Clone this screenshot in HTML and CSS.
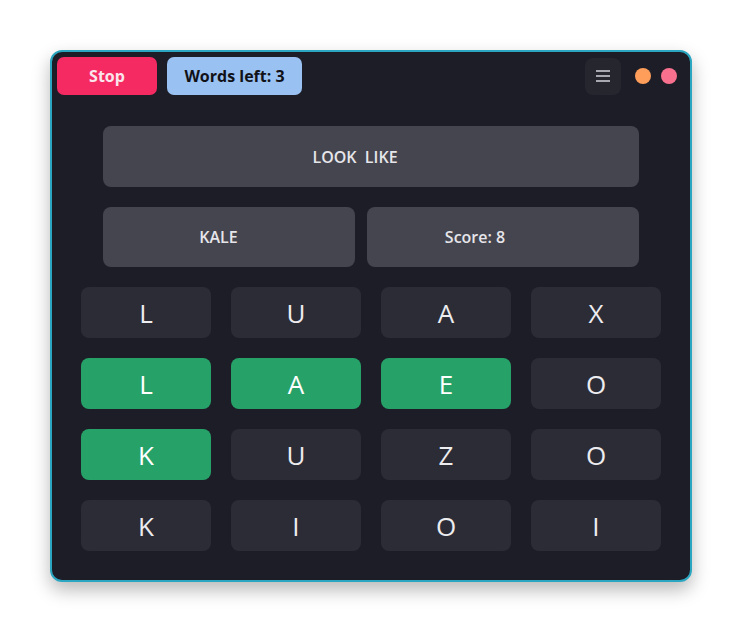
FILE: index.html
```
<!DOCTYPE html>
<html>
<head>
<meta charset="utf-8">
<link rel="stylesheet" href="styles.css">
</head>
<body>
<div class="window">
  <div class="header">
    <button class="btn stop">Stop</button>
    <div class="btn words">Words left: 3</div>
    <div class="spacer"></div>
    <button class="menu">
      <svg width="14" height="12" viewBox="0 0 14 12"><path d="M0 1h14M0 6h14M0 11h14" stroke="#a8a8b0" stroke-width="2"/></svg>
    </button>
    <span class="dot orange"></span>
    <span class="dot pink"></span>
  </div>
  <div class="content">
    <div class="info wide">LOOK&nbsp; LIKE</div>
    <div class="inforow">
      <div class="info word">KALE</div>
      <div class="info score">Score: 8</div>
    </div>
    <div class="grid">
      <div class="tile">L</div><div class="tile">U</div><div class="tile">A</div><div class="tile">X</div>
      <div class="tile on">L</div><div class="tile on">A</div><div class="tile on">E</div><div class="tile">O</div>
      <div class="tile on">K</div><div class="tile">U</div><div class="tile">Z</div><div class="tile">O</div>
      <div class="tile">K</div><div class="tile">I</div><div class="tile">O</div><div class="tile">I</div>
    </div>
  </div>
</div>
</body>
</html>
```
FILE: styles.css
```
html, body { margin: 0; padding: 0; background: #ffffff; }
body { padding: 50px; font-family: "Open Sans", "Noto Sans", sans-serif; }
.window {
  box-sizing: border-box;
  width: 642px;
  height: 532px;
  background: #1d1d27;
  border: 2px solid #2ba6c0;
  border-radius: 12px;
  box-shadow: 0 8px 18px rgba(0,0,0,0.28);
  display: flex;
  flex-direction: column;
}
.header {
  display: flex;
  align-items: center;
  padding: 5px 13px 0 5px;
  height: 38px;
}
.btn {
  box-sizing: border-box;
  height: 38px;
  border: none;
  border-radius: 7px;
  font-family: inherit;
  font-weight: 700;
  font-size: 16px;
  display: flex;
  align-items: center;
  justify-content: center;
  padding: 0;
}
.stop { width: 100px; background: #f62a62; color: #fbe5ec; }
.words { width: 135px; margin-left: 10px; background: #99c1f1; color: #111118; }
.spacer { flex: 1; }
.menu {
  width: 36px; height: 37px;
  border: none; border-radius: 8px;
  background: #26262f;
  display: flex; align-items: center; justify-content: center;
  padding: 0;
}
.dot { width: 16px; height: 16px; border-radius: 50%; }
.orange { background: #ff9d5a; margin-left: 14px; }
.pink { background: #f7718e; margin-left: 10px; }
.content {
  display: flex;
  flex-direction: column;
  align-items: center;
  padding-top: 31px;
}
.info {
  box-sizing: border-box;
  height: 61px;
  background: #45454f;
  border-radius: 8px;
  color: #e6e6ea;
  font-weight: 600;
  font-size: 16px;
  display: flex;
  align-items: center;
  justify-content: center;
}
.wide { width: 536px; padding-right: 32px; }
.inforow {
  width: 536px;
  margin-top: 20px;
  display: grid;
  grid-template-columns: 252px 272px;
  gap: 12px;
}
.inforow .info { height: 60px; }
.word { padding-right: 21px; }
.score { padding-right: 56px; }
.grid {
  margin-top: 20px;
  display: grid;
  grid-template-columns: repeat(4, 130px);
  grid-auto-rows: 51px;
  gap: 20px;
}
.tile {
  background: #2c2c36;
  border-radius: 8px;
  color: #ededf0;
  font-size: 26px;
  display: flex;
  align-items: center;
  justify-content: center;
}
.tile.on { background: #26a269; color: #ffffff; }
```
